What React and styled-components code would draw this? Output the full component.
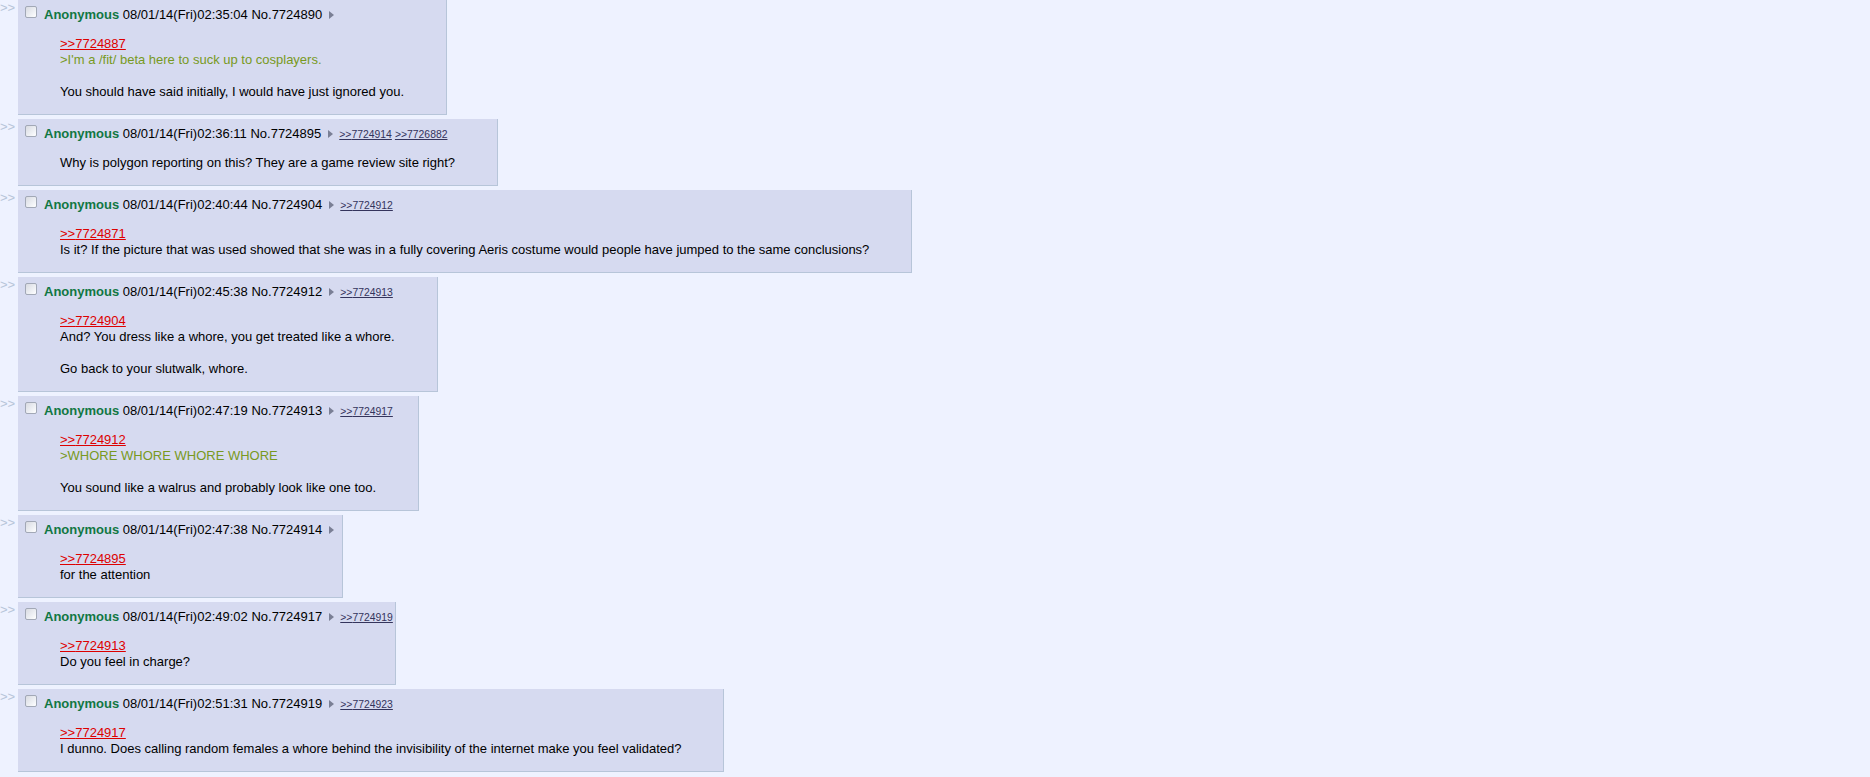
import React from "react";
import styled, { createGlobalStyle } from "styled-components";

const GlobalStyle = createGlobalStyle`
  body {
    margin: 0;
    background: #eef2ff;
    color: #000;
    font-family: "Liberation Sans", Arial, sans-serif;
    font-size: 13px;
  }
`;

const Thread = styled.div`
  display: flex;
  flex-direction: column;
  align-items: flex-start;
  gap: 4px;
`;

const PostRow = styled.div`
  display: flex;
  align-items: flex-start;
`;

const SideArrows = styled.div`
  flex: none;
  width: 18px;
  color: #b7c5d9;
  line-height: 16px;
`;

const Reply = styled.div`
  background: #d6daf0;
  border-right: 1px solid #b7c5d9;
  border-bottom: 1px solid #b7c5d9;
  padding: 2px;
`;

const PostInfo = styled.div`
  display: flex;
  align-items: flex-start;
  height: 21px;
  white-space: nowrap;
`;

const Check = styled.span`
  flex: none;
  box-sizing: border-box;
  width: 12px;
  height: 12px;
  margin: 4px 7px 0 5px;
  border: 1px solid #a2a8b6;
  border-radius: 2px;
  background: linear-gradient(135deg, #d9dbe2 0%, #eef0f4 60%, #ffffff 100%);
`;

const Meta = styled.span`
  margin-top: 5px;
  line-height: 16px;
`;

const Name = styled.span`
  color: #117743;
  font-weight: bold;
`;

const Arrow = styled.span`
  flex: none;
  width: 0;
  height: 0;
  margin: 9px 6px 0 7px;
  border-left: 5px solid #7a7f95;
  border-top: 4px solid transparent;
  border-bottom: 4px solid transparent;
`;

const Backlinks = styled.span`
  display: flex;
  gap: 3px;
  margin-top: 6px;
  line-height: 16px;
`;

const Backlink = styled.a`
  color: #34345c;
  font-size: 10.4px;
  text-decoration: underline;
`;

const Message = styled.blockquote`
  margin: 13px 40px 12px;
  line-height: 16px;
  white-space: nowrap;
`;

const Line = styled.div`
  min-height: 16px;
  color: ${(p) => (p.$green ? "#789922" : "#000")};
`;

const QuoteLink = styled.a`
  color: #dd0000;
  text-decoration: underline;
`;

const posts = [
  {
    time: "08/01/14(Fri)02:35:04",
    no: "7724890",
    backlinks: [],
    lines: [
      { q: "7724887" },
      { g: ">I'm a /fit/ beta here to suck up to cosplayers." },
      { t: "" },
      { t: "You should have said initially, I would have just ignored you." },
    ],
  },
  {
    time: "08/01/14(Fri)02:36:11",
    no: "7724895",
    backlinks: ["7724914", "7726882"],
    lines: [{ t: "Why is polygon reporting on this? They are a game review site right?" }],
  },
  {
    time: "08/01/14(Fri)02:40:44",
    no: "7724904",
    backlinks: ["7724912"],
    lines: [
      { q: "7724871" },
      {
        t: "Is it? If the picture that was used showed that she was in a fully covering Aeris costume would people have jumped to the same conclusions?",
      },
    ],
  },
  {
    time: "08/01/14(Fri)02:45:38",
    no: "7724912",
    backlinks: ["7724913"],
    lines: [
      { q: "7724904" },
      { t: "And? You dress like a whore, you get treated like a whore." },
      { t: "" },
      { t: "Go back to your slutwalk, whore." },
    ],
  },
  {
    time: "08/01/14(Fri)02:47:19",
    no: "7724913",
    backlinks: ["7724917"],
    lines: [
      { q: "7724912" },
      { g: ">WHORE WHORE WHORE WHORE" },
      { t: "" },
      { t: "You sound like a walrus and probably look like one too." },
    ],
  },
  {
    time: "08/01/14(Fri)02:47:38",
    no: "7724914",
    backlinks: [],
    lines: [{ q: "7724895" }, { t: "for the attention" }],
  },
  {
    time: "08/01/14(Fri)02:49:02",
    no: "7724917",
    backlinks: ["7724919"],
    lines: [{ q: "7724913" }, { t: "Do you feel in charge?" }],
  },
  {
    time: "08/01/14(Fri)02:51:31",
    no: "7724919",
    backlinks: ["7724923"],
    lines: [
      { q: "7724917" },
      {
        t: "I dunno. Does calling random females a whore behind the invisibility of the internet make you feel validated?",
      },
    ],
  },
];

function Post({ post }) {
  return (
    <PostRow>
      <SideArrows>&gt;&gt;</SideArrows>
      <Reply>
        <PostInfo>
          <Check />
          <Meta>
            <Name>Anonymous</Name> {post.time} No.{post.no}
          </Meta>
          <Arrow />
          {post.backlinks.length > 0 && (
            <Backlinks>
              {post.backlinks.map((b) => (
                <Backlink key={b}>&gt;&gt;{b}</Backlink>
              ))}
            </Backlinks>
          )}
        </PostInfo>
        <Message>
          {post.lines.map((l, i) =>
            l.q ? (
              <Line key={i}>
                <QuoteLink>&gt;&gt;{l.q}</QuoteLink>
              </Line>
            ) : l.g ? (
              <Line key={i} $green>
                {l.g}
              </Line>
            ) : (
              <Line key={i}>{l.t}</Line>
            )
          )}
        </Message>
      </Reply>
    </PostRow>
  );
}

export default function App() {
  return (
    <>
      <GlobalStyle />
      <Thread>
        {posts.map((p) => (
          <Post key={p.no} post={p} />
        ))}
      </Thread>
    </>
  );
}
